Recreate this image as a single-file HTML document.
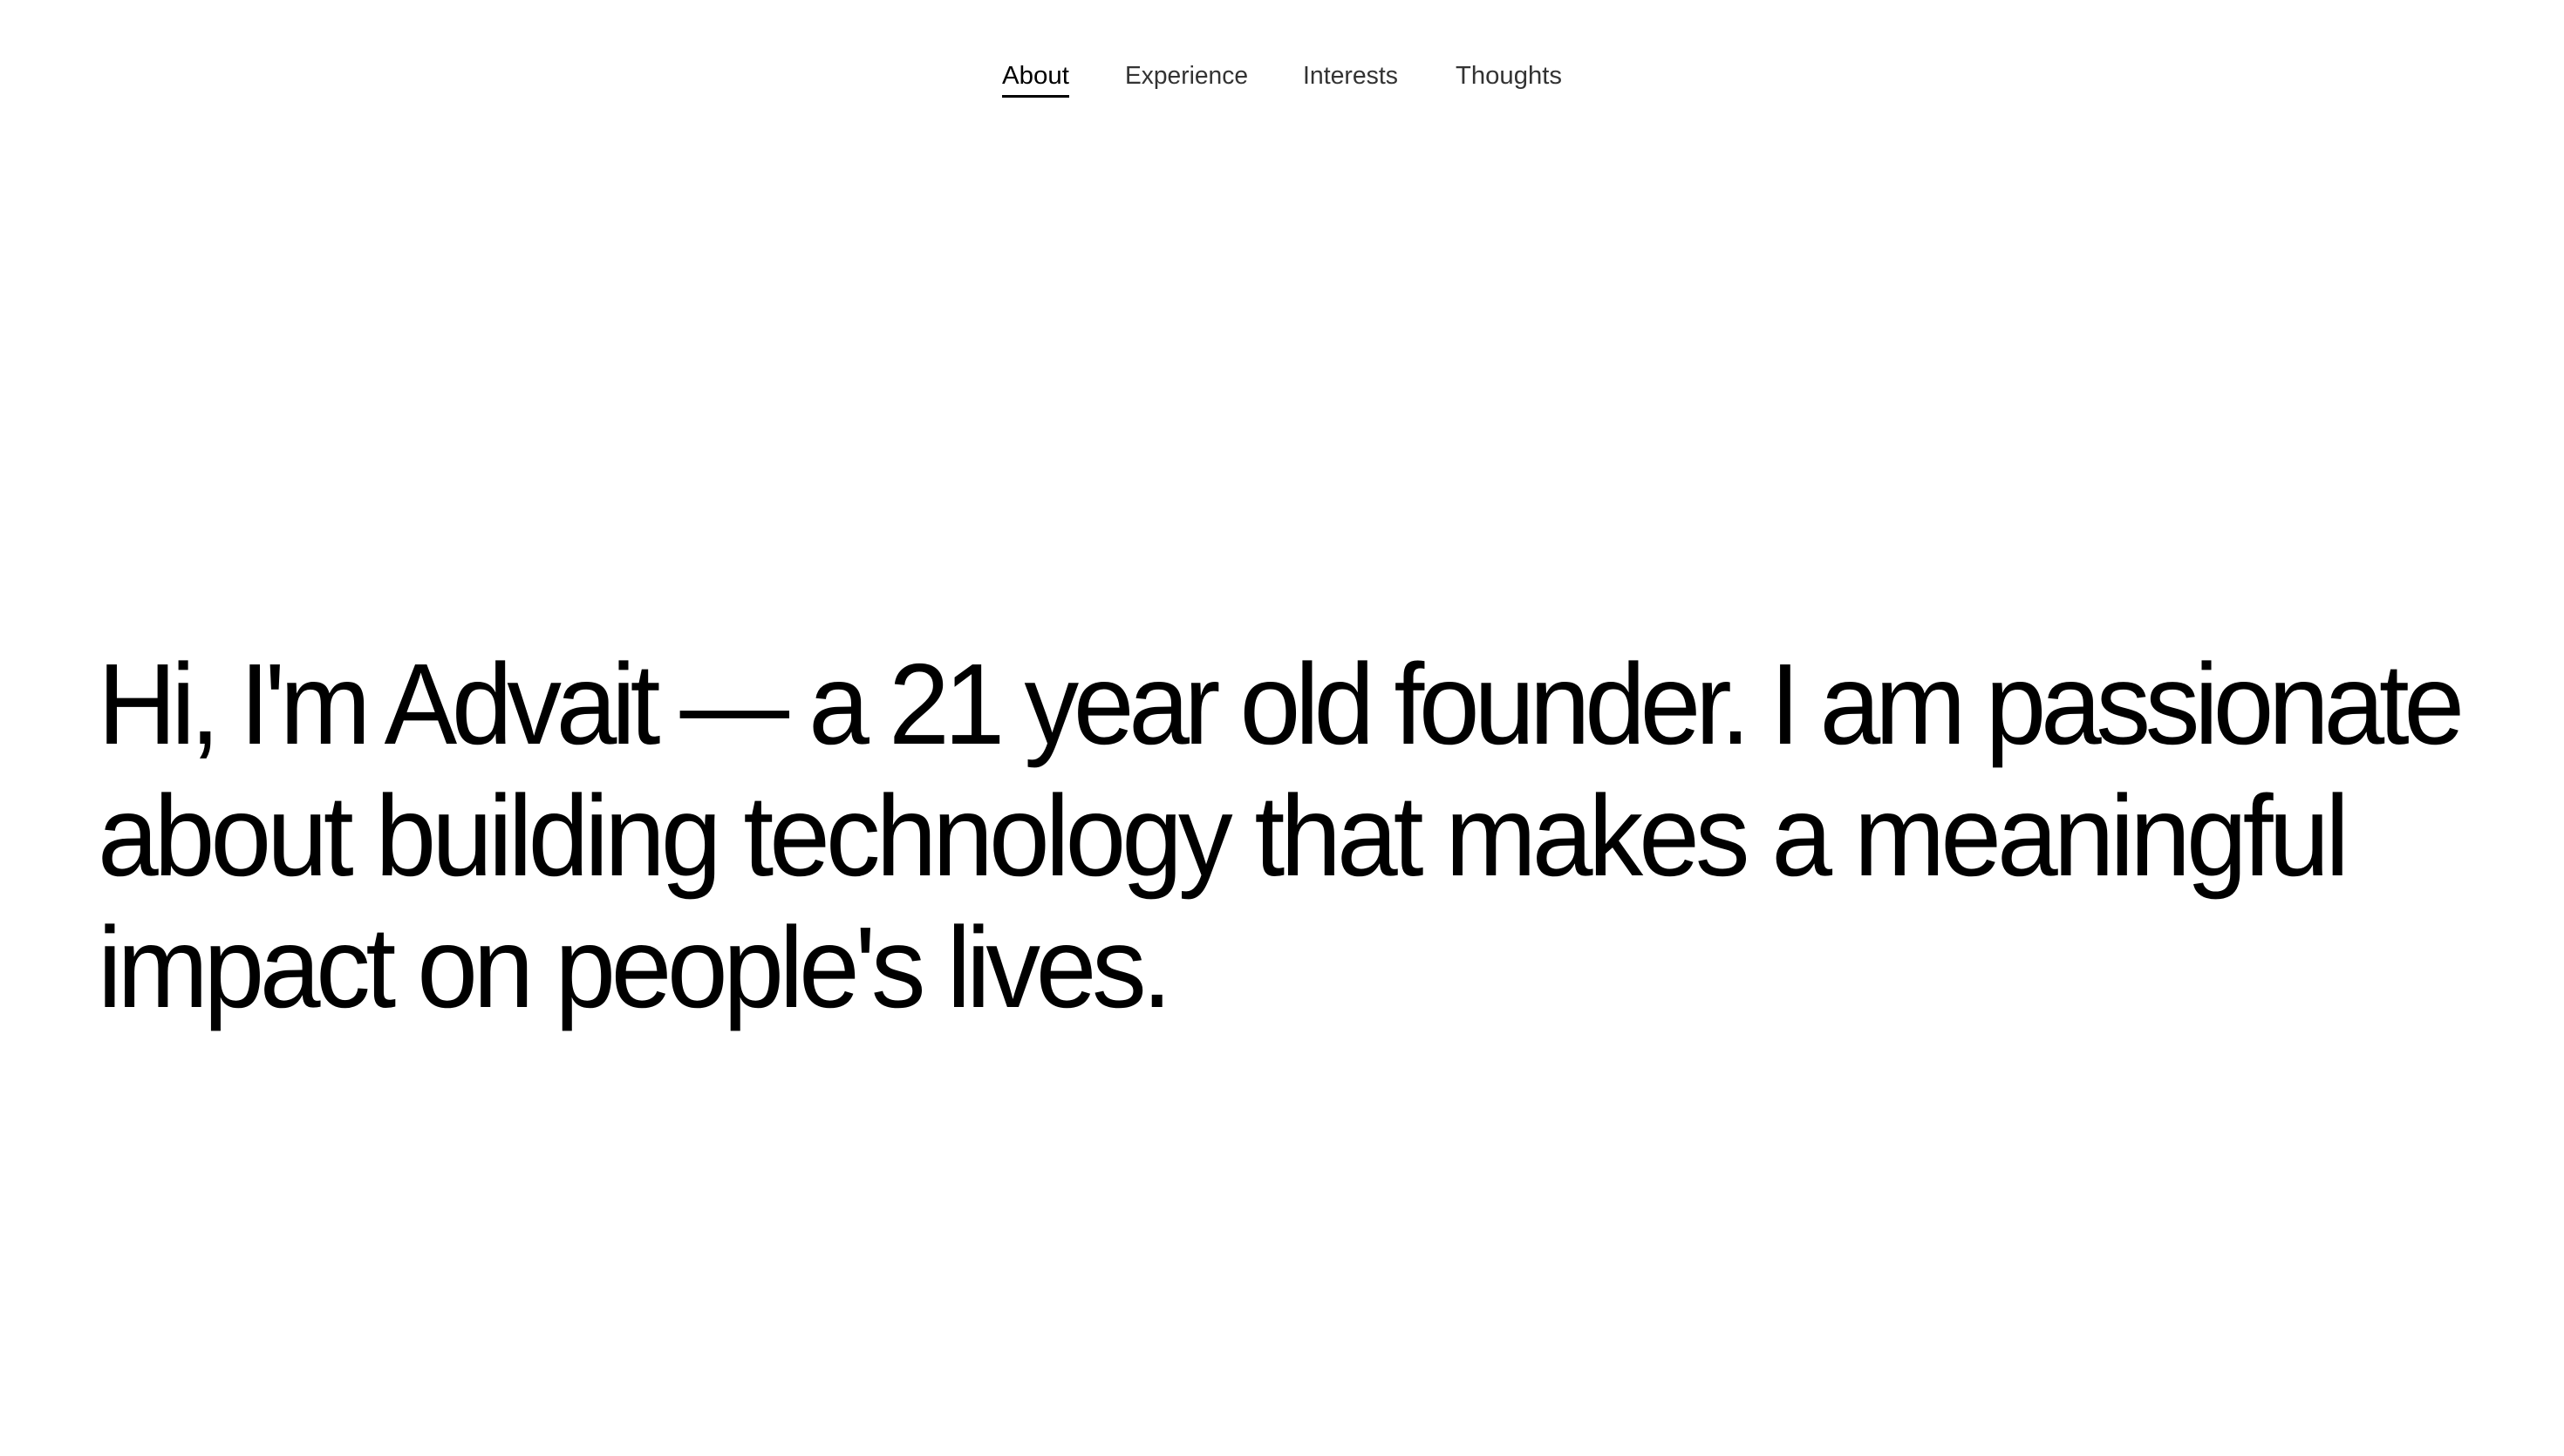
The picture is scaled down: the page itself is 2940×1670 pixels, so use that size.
<!DOCTYPE html>
<html><head><meta charset="utf-8"><style>
html,body{margin:0;padding:0;background:#fff;width:2940px;height:1670px;overflow:hidden}
svg{display:block}
</style></head><body>
<svg width="2940" height="1670" viewBox="0 0 2940 1670" xmlns="http://www.w3.org/2000/svg" font-family="Liberation Sans, Arial, sans-serif">
<g font-size="29">
<text x="1149" y="96" fill="#000" textLength="77" lengthAdjust="spacingAndGlyphs">About</text>
<text x="1290" y="96" fill="#333" textLength="141" lengthAdjust="spacingAndGlyphs">Experience</text>
<text x="1494" y="96" fill="#333" textLength="109" lengthAdjust="spacingAndGlyphs">Interests</text>
<text x="1669" y="96" fill="#333" textLength="122" lengthAdjust="spacingAndGlyphs">Thoughts</text>
</g>
<rect x="1149" y="109" width="77" height="3" fill="#000"/>
<g font-size="132" fill="#000" transform="scale(0.95,1)">
<text x="117.9" y="853" textLength="2857" lengthAdjust="spacing">Hi, I'm Advait — a 21 year old founder. I am passionate</text>
<text x="117.9" y="1004" textLength="2718" lengthAdjust="spacing">about building technology that makes a meaningful</text>
<text x="117.9" y="1155" textLength="1297" lengthAdjust="spacing">impact on people's lives.</text>
</g>
</svg>
</body></html>
